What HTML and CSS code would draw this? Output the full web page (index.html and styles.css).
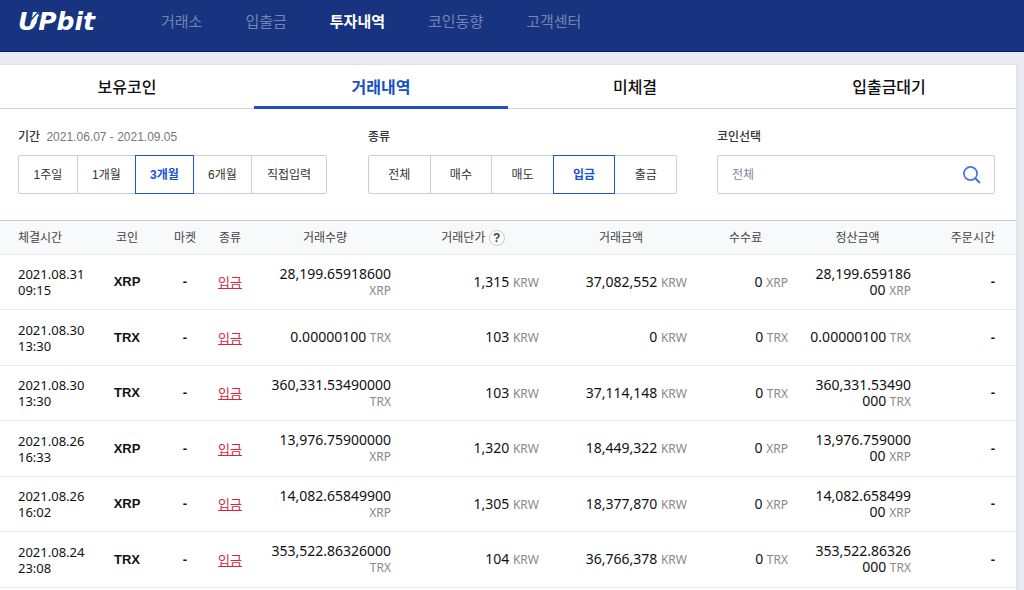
FILE: index.html
```html
<!DOCTYPE html>
<html lang="ko">
<head>
<meta charset="utf-8">
<meta name="viewport" content="width=device-width, initial-scale=1">
<title>UPbit 투자내역</title>
<link rel="stylesheet" href="styles.css">
</head>
<body>
<header class="topbar">
  <a class="logo" href="#">UPbit<svg class="logo-arrow" width="14" height="18" viewBox="0 0 14 18" aria-hidden="true"><path d="M2 7 L8 0 L11 5 L8 4 L6 12 L3 12 L5 6 Z" fill="#fff"/><path d="M1 8 L8 0 M8 1 L11 6" fill="none" stroke="#183380" stroke-width="1.2"/></svg></a>
  <nav class="menu">
    <a href="#">거래소</a>
    <a href="#">입출금</a>
    <a class="current" href="#">투자내역</a>
    <a href="#">코인동향</a>
    <a href="#">고객센터</a>
  </nav>
</header>
<main class="panel">
  <nav class="tabs">
    <a href="#">보유코인</a>
    <a class="current" href="#">거래내역</a>
    <a href="#">미체결</a>
    <a href="#">입출금대기</a>
  </nav>
  <section class="filters">
    <div class="filter">
      <div class="filter-title" id="period">기간 <span class="range">2021.06.07 - 2021.09.05</span></div>
      <div class="group" role="group" aria-labelledby="period">
        <button type="button">1주일</button>
        <button type="button">1개월</button>
        <button type="button" class="on">3개월</button>
        <button type="button">6개월</button>
        <button type="button" class="wide">직접입력</button>
      </div>
    </div>
    <div class="filter">
      <div class="filter-title" id="kind">종류</div>
      <div class="group kinds" role="group" aria-labelledby="kind">
        <button type="button">전체</button>
        <button type="button">매수</button>
        <button type="button">매도</button>
        <button type="button" class="on">입금</button>
        <button type="button">출금</button>
      </div>
    </div>
    <div class="filter">
      <label class="filter-title" for="coin">코인선택</label>
      <div class="search">
        <input id="coin" type="text" placeholder="전체">
        <button type="button" aria-label="검색"><svg width="20" height="20" viewBox="0 0 20 20" fill="none" stroke="#4671ea" stroke-width="1.7"><circle cx="8.5" cy="8.5" r="6.6"/><path d="M13.2 13.2 L18 18" stroke-width="2"/></svg></button>
      </div>
    </div>
  </section>
  <table class="history">
    <colgroup><col class="c-time"><col class="c-coin"><col class="c-market"><col class="c-kind"><col class="c-volume"><col class="c-price"><col class="c-price"><col class="c-fee"><col class="c-total"><col class="c-order"></colgroup>
    <thead>
      <tr><th class="time">체결시간</th><th>코인</th><th>마켓</th><th>종류</th><th>거래수량</th><th class="num-head">거래단가 <button type="button" class="help" aria-label="도움말">?</button></th><th class="num-head">거래금액</th><th class="num-head">수수료</th><th class="num-head">정산금액</th><th class="order">주문시간</th></tr>
    </thead>
    <tbody>
      <tr><td class="time">2021.08.31 09:15</td><td class="coin">XRP</td><td class="coin">-</td><td><a href="#">입금</a></td><td class="num">28,199.65918600 <i>XRP</i></td><td class="num">1,315 <i>KRW</i></td><td class="num">37,082,552 <i>KRW</i></td><td class="num">0 <i>XRP</i></td><td class="num"><span>28,199.659186</span><span>00</span> <i>XRP</i></td><td class="coin order">-</td></tr>
      <tr><td class="time">2021.08.30 13:30</td><td class="coin">TRX</td><td class="coin">-</td><td><a href="#">입금</a></td><td class="num">0.00000100 <i>TRX</i></td><td class="num">103 <i>KRW</i></td><td class="num">0 <i>KRW</i></td><td class="num">0 <i>TRX</i></td><td class="num">0.00000100 <i>TRX</i></td><td class="coin order">-</td></tr>
      <tr><td class="time">2021.08.30 13:30</td><td class="coin">TRX</td><td class="coin">-</td><td><a href="#">입금</a></td><td class="num">360,331.53490000 <i>TRX</i></td><td class="num">103 <i>KRW</i></td><td class="num">37,114,148 <i>KRW</i></td><td class="num">0 <i>TRX</i></td><td class="num"><span>360,331.53490</span><span>000</span> <i>TRX</i></td><td class="coin order">-</td></tr>
      <tr><td class="time">2021.08.26 16:33</td><td class="coin">XRP</td><td class="coin">-</td><td><a href="#">입금</a></td><td class="num">13,976.75900000 <i>XRP</i></td><td class="num">1,320 <i>KRW</i></td><td class="num">18,449,322 <i>KRW</i></td><td class="num">0 <i>XRP</i></td><td class="num"><span>13,976.759000</span><span>00</span> <i>XRP</i></td><td class="coin order">-</td></tr>
      <tr><td class="time">2021.08.26 16:02</td><td class="coin">XRP</td><td class="coin">-</td><td><a href="#">입금</a></td><td class="num">14,082.65849900 <i>XRP</i></td><td class="num">1,305 <i>KRW</i></td><td class="num">18,377,870 <i>KRW</i></td><td class="num">0 <i>XRP</i></td><td class="num"><span>14,082.658499</span><span>00</span> <i>XRP</i></td><td class="coin order">-</td></tr>
      <tr><td class="time">2021.08.24 23:08</td><td class="coin">TRX</td><td class="coin">-</td><td><a href="#">입금</a></td><td class="num">353,522.86326000 <i>TRX</i></td><td class="num">104 <i>KRW</i></td><td class="num">36,766,378 <i>KRW</i></td><td class="num">0 <i>TRX</i></td><td class="num"><span>353,522.86326</span><span>000</span> <i>TRX</i></td><td class="coin order">-</td></tr>
    </tbody>
  </table>
</main>
</body>
</html>
```
FILE: styles.css
```css
* { box-sizing: border-box; }
body {
  margin: 0;
  min-height: 100vh;
  display: flex;
  flex-direction: column;
  background: #e9ebf0;
  color: #111;
  font: 12px/16px "Liberation Sans", "Noto Sans CJK KR", sans-serif;
}
a { color: inherit; text-decoration: none; }
button, input { font: inherit; color: inherit; }

.topbar {
  display: flex;
  height: 52px;
  padding: 0 18px;
  background: #183380;
  border-bottom: 1px solid #061b66;
}
.logo {
  position: relative;
  width: 143px;
  padding-top: 8px;
  color: #fff;
  font: italic bold 25px/28px "DejaVu Sans", sans-serif;
}
.logo-arrow { position: absolute; left: 12px; top: 12px; }
.menu { display: flex; gap: 43px; }
.menu a {
  padding-top: 10px;
  color: #7585b2;
  font-size: 15px;
  line-height: 24px;
}
.menu .current { color: #fff; font-weight: bold; }

.panel {
  flex: 1;
  margin: 13px 8px 0 0;
  background: #fff;
  box-shadow: 0 0 3px #d3d6dd;
}
.tabs { display: flex; height: 44px; border-bottom: 1px solid #cfd0d6; }
.tabs a {
  flex: 1;
  height: 44px;
  text-align: center;
  font-size: 16px;
  font-weight: 500;
  line-height: 46px;
}
.tabs .current {
  color: #1550c4;
  font-weight: bold;
  border-bottom: 3px solid #1f50c5;
}

.filters {
  display: grid;
  grid-template-columns: 350fr 349fr 278fr;
  padding: 20px 21px 26px 18px;
}
.filter-title { display: block; margin-bottom: 10px; color: #333; font-weight: 500; }
.range { margin-left: 3px; color: #777; font-weight: normal; }
.group { display: flex; }
.group button {
  width: 59px;
  height: 39px;
  padding: 0;
  margin-right: -1px;
  background: #fff;
  border: 1px solid #cdced3;
  color: #333;
}
.group button:first-child { width: 60px; border-radius: 2px 0 0 2px; }
.group button:last-child { border-radius: 0 2px 2px 0; }
.group .wide { width: 76px; }
.group .on { z-index: 1; border-color: #1a54de; color: #1650dc; font-weight: bold; }
.kinds { width: 308px; }
.kinds button { flex: 1; }
.search {
  display: flex;
  align-items: center;
  height: 39px;
  padding: 0 12px 0 14px;
  border: 1px solid #cdced3;
  border-radius: 2px;
}
.search input { flex: 1; min-width: 0; padding: 0; border: 0; outline: 0; background: none; }
.search input::placeholder { color: #7e8598; opacity: 1; }
.search button { display: flex; padding: 0; border: 0; background: none; }

.history {
  width: 100%;
  table-layout: fixed;
  border-collapse: collapse;
  border-top: 1px solid #c8ccd5;
}
.c-time { width: 95px; }
.c-coin { width: 64px; }
.c-market { width: 52px; }
.c-kind { width: 38px; }
.c-volume { width: 152px; }
.c-price { width: 148px; }
.c-fee { width: 101px; }
.c-total { width: 123px; }
.c-order { width: 95px; }
.history th {
  height: 34px;
  padding: 0;
  background: #f8f9fb;
  color: #444;
  font-weight: normal;
}
.history .num-head { padding-right: 4px; }
.help {
  width: 16px;
  height: 16px;
  padding: 0;
  border: 1px solid #ccc;
  border-radius: 50%;
  background: #fff;
  color: #444;
  font-weight: bold;
  line-height: 14px;
}
.history td {
  height: 55px;
  padding: 0;
  border-top: 1px solid #e9eaed;
  text-align: center;
  font: 13px/16px "Noto Sans", "Noto Sans CJK KR", sans-serif;
}
.history tr:nth-child(even) td { height: 56px; }
.history tr:last-child td { border-bottom: 1px solid #e9eaed; }
.history .time { padding-left: 18px; text-align: left; }
.history .coin { font-family: "Liberation Sans", sans-serif; font-weight: bold; }
.history td a { color: #d8263f; text-decoration: underline; }
.history .num {
  padding: 0 10px;
  text-align: right;
  font-size: 14px;
  word-break: break-all;
}
.num i { display: inline-block; color: #888; font-size: 12px; font-style: normal; }
.history .order { padding-right: 21px; text-align: right; }
```
